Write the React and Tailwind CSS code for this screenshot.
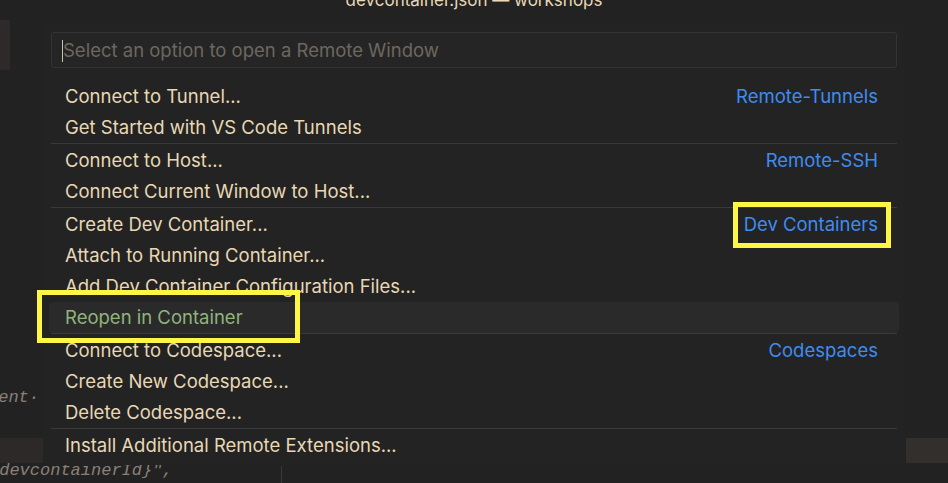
import React from 'react'

const groups = [
  { label: 'Remote-Tunnels', items: ['Connect to Tunnel...', 'Get Started with VS Code Tunnels'] },
  { label: 'Remote-SSH', items: ['Connect to Host...', 'Connect Current Window to Host...'] },
  {
    label: 'Dev Containers',
    items: ['Create Dev Container...', 'Attach to Running Container...', 'Add Dev Container Configuration Files...', 'Reopen in Container'],
    active: 3,
  },
  { label: 'Codespaces', items: ['Connect to Codespace...', 'Create New Codespace...', 'Delete Codespace...'] },
  { items: ['Install Additional Remote Extensions...'] },
]

const Row = ({ text, label, active }) => (
  <div
    className={`flex items-center justify-between h-[31px] pl-4 pr-[21px] rounded-[4px] ${
      active ? 'bg-[#2b2a2a] text-[#8fb57c]' : 'text-[#e8d8b4]'
    }`}
  >
    <span>{text}</span>
    {label && <span className="text-[#3f8cf0]">{label}</span>}
  </div>
)

const QuickPick = () => (
  <div className="absolute left-[43px] top-[24px] w-[862px] bg-[#232323] px-[6px] pb-[4px] rounded-b-md">
    <div className="mx-[2px] mt-[8px] h-[36px] flex items-center pl-[10px] pt-px border border-[#343434] rounded-[3px] bg-[#252525]">
      <span className="w-px h-[22px] bg-[#c9c0b0]" />
      <span className="text-[#6d675f]">Select an option to open a Remote Window</span>
    </div>
    <div className="mt-[13px]">
      {groups.map((g, gi) => (
        <div key={gi}>
          {gi > 0 && <div className="mx-[2px] h-px mb-px bg-[#39393b]" />}
          {g.items.map((item, i) => (
            <Row key={item} text={item} label={i === 0 ? g.label : null} active={g.active === i} />
          ))}
        </div>
      ))}
    </div>
  </div>
)

export default function App() {
  return (
    <div
      className="relative w-[948px] h-[483px] overflow-hidden bg-[#222222] text-[18.5px]"
      style={{ fontFamily: 'Inter, "Noto Sans", sans-serif' }}
    >
      {/* editor behind the quick pick */}
      <div className="flex justify-center h-[20px]">
        <span className="-mt-[12px] text-[17px] text-[#e8d8b4] leading-[24px]">devcontainer.json — workshops</span>
      </div>
      <div className="w-[10px] h-[50px] bg-[#2e2a29]" />
      <div className="h-[318px]" />
      <div
        className="h-[20px] leading-[20px] italic text-[#8a8078] text-[17px] -ml-[12px]"
        style={{ fontFamily: '"Liberation Mono", monospace' }}
      >
        tent·
      </div>
      <div className="h-[30px]" />
      <div className="h-[25px] flex justify-between">
        <div className="w-[43px] bg-[#2c2928]" />
        <div className="w-[42px] bg-[#332f2c]" />
      </div>
      <div className="flex h-[20px]">
        <div
          className="w-[292px] shrink-0 italic text-[#8a8078] text-[17px] leading-[16px] -ml-[11px]"
          style={{ fontFamily: '"Liberation Mono", monospace' }}
        >
          {'{devcontainerId}",'}
        </div>
        <div className="w-px bg-[#3a3a3a] mt-[3px]" />
      </div>

      <QuickPick />

      {/* highlight annotations */}
      <div className="absolute left-[733px] top-[202px] w-[158px] h-[46px] border-[5px] border-[#fdf645]" />
      <div className="absolute left-[37px] top-[290px] w-[263px] h-[53px] border-[5px] border-[#fdf645]" />
    </div>
  )
}
